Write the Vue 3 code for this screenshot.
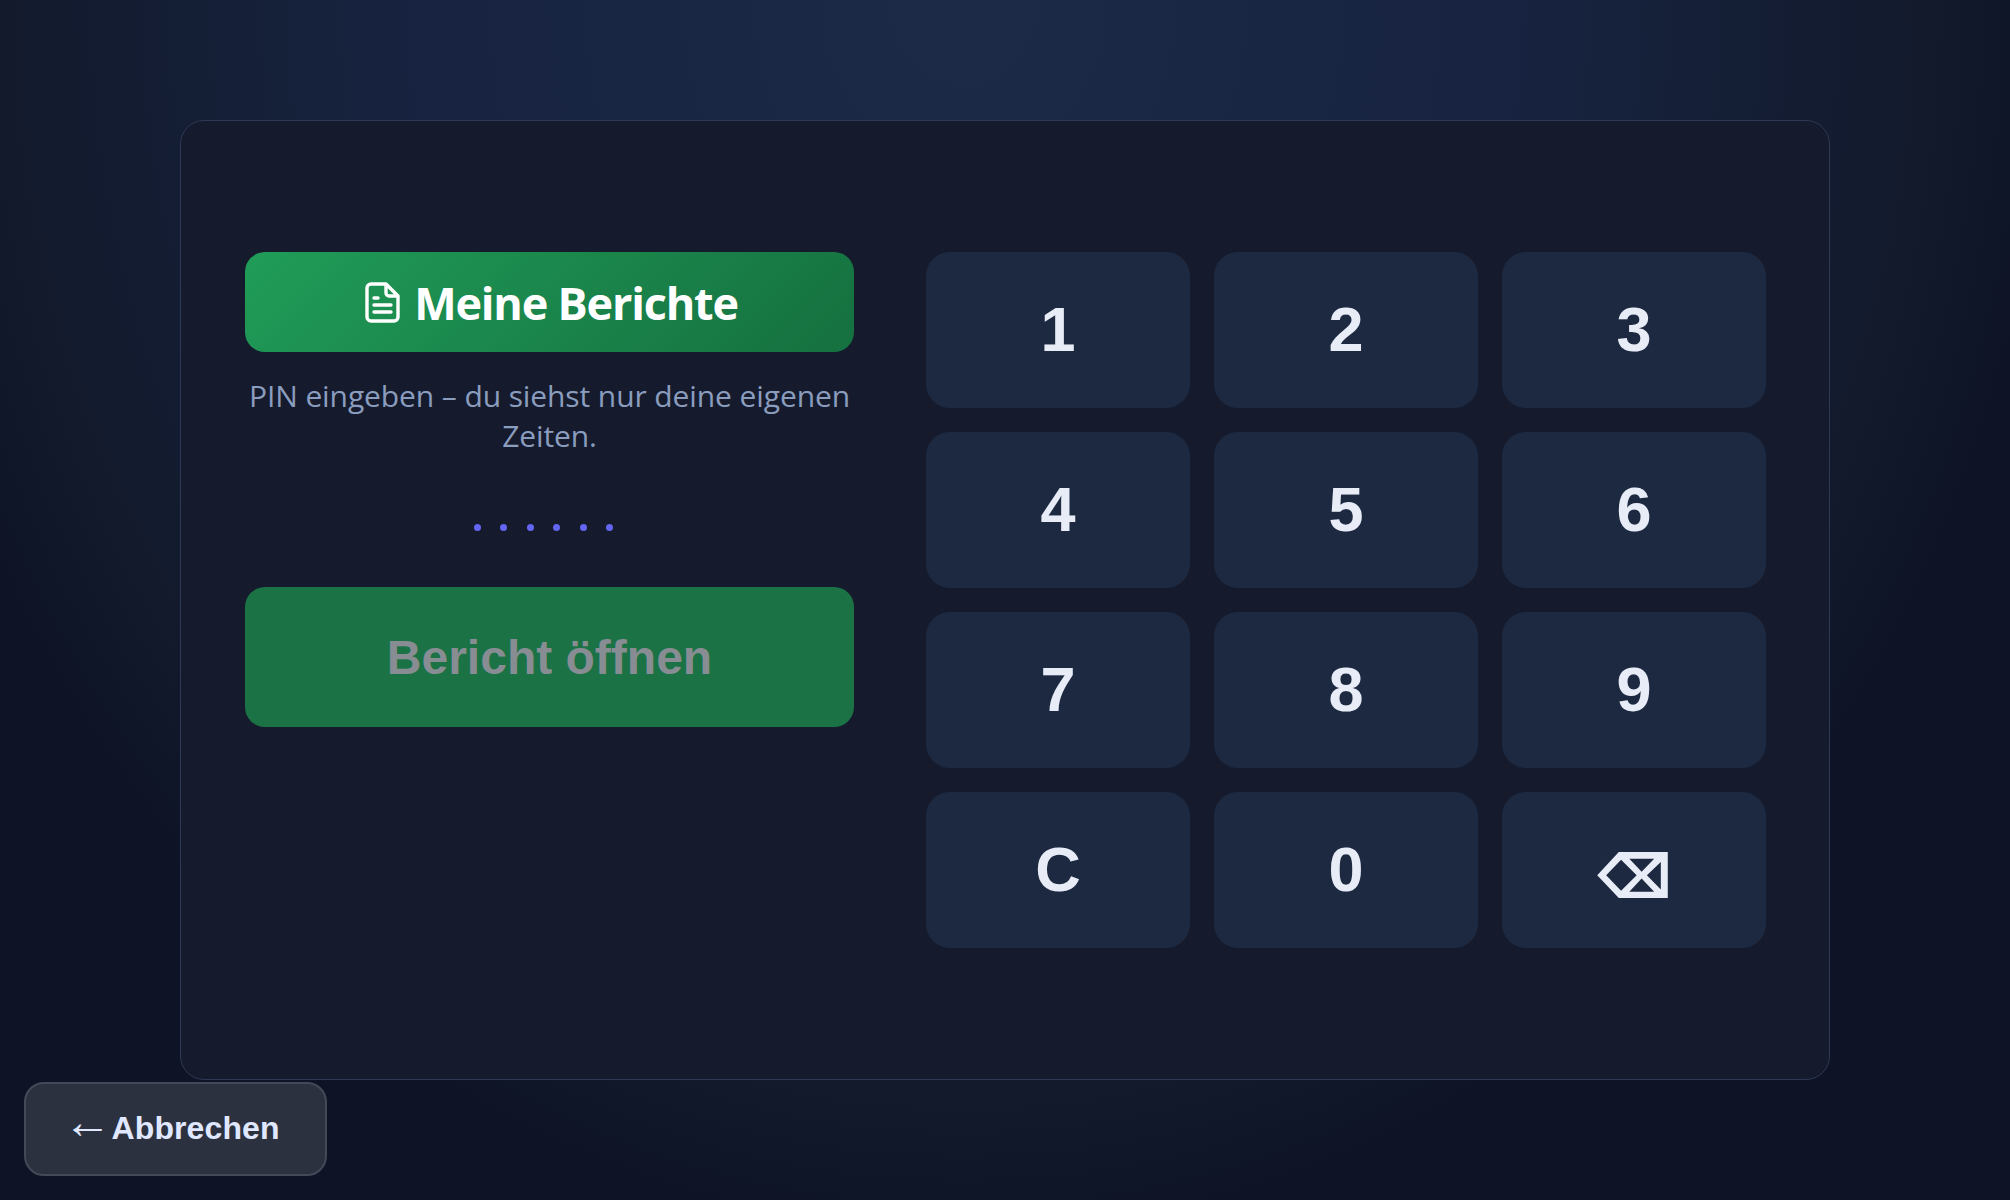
<script setup>
const keys = ['1', '2', '3', '4', '5', '6', '7', '8', '9', 'C', '0']
const dots = [0, 1, 2, 3, 4, 5]
</script>

<template>
  <div class="page">
    <div class="card">
      <div class="left">
        <div class="title">
          <svg class="doc" viewBox="0 0 35 41" width="35" height="41">
            <path d="M6 2h15l12 12v21a4 4 0 0 1-4 4H6a4 4 0 0 1-4-4V6a4 4 0 0 1 4-4z" fill="none" stroke="#fff" stroke-width="3.4" stroke-linejoin="round" />
            <path d="M21 3v8a3 3 0 0 0 3 3h8" fill="none" stroke="#fff" stroke-width="3.4" />
            <path d="M9 16h4M9 23h17M9 30h17" fill="none" stroke="#fff" stroke-width="3.4" stroke-linecap="round" />
          </svg>
          <span>Meine Berichte</span>
        </div>
        <p class="hint">PIN eingeben – du siehst nur deine eigenen Zeiten.</p>
        <div class="dots">
          <span v-for="d in dots" :key="d" class="dot"></span>
        </div>
        <button class="open" disabled>Bericht öffnen</button>
      </div>
      <div class="pad">
        <button v-for="k in keys" :key="k" class="key">{{ k }}</button>
        <button class="key" aria-label="Löschen">
          <svg class="del" viewBox="0 0 71 46.3" width="71" height="46">
            <path fill="#e8ecf6" fill-rule="evenodd" d="M0 23.3 21.7 0H71V46.3H21.7ZM9 23.3 24 39 39.7 23.3 24 7.7ZM32.3 6.7 44.7 20 57.3 6.7ZM64 10 50 23.3 64 37.7ZM32.3 40H57.3L44.7 26.7Z" />
          </svg>
        </button>
      </div>
    </div>
    <button class="back">
      <span class="arrow">←</span>
      <span>Abbrechen</span>
    </button>
  </div>
</template>

<style>
html, body {
  margin: 0;
  background: #0c1222;
}
</style>

<style scoped>
.page {
  width: 2010px;
  height: 1200px;
  display: flex;
  align-items: center;
  justify-content: center;
  position: relative;
  overflow: hidden;
  background: radial-gradient(ellipse 1100px 1250px at 48% 0%, #1c2a47 0%, #172340 50%, #121a2c 87%, #0e1426 100%);
  font-family: "Liberation Sans", Arial, sans-serif;
}

.card {
  box-sizing: border-box;
  width: 1650px;
  height: 960px;
  padding: 0 63px 0 64px;
  display: flex;
  align-items: center;
  gap: 72px;
  background: #151b2d;
  border: 1px solid #2d3854;
  border-radius: 24px;
}

.left {
  width: 609px;
  align-self: flex-start;
  padding-top: 131px;
  display: flex;
  flex-direction: column;
  align-items: stretch;
}

.title {
  height: 100px;
  padding-left: 4px;
  display: flex;
  align-items: center;
  justify-content: center;
  gap: 14px;
  border-radius: 20px;
  background: linear-gradient(135deg, #209c58, #15703f);
  color: #fff;
  font-family: "Open Sans", sans-serif;
  font-size: 45px;
  font-weight: 700;
  letter-spacing: -1.2px;
}

.doc {
  flex: none;
}

.hint {
  margin: 24px 0 0;
  text-align: center;
  color: #8b9dbf;
  font-family: "Open Sans", sans-serif;
  font-size: 30px;
  letter-spacing: -0.1px;
  line-height: 40px;
}

.dots {
  display: flex;
  justify-content: center;
  gap: 19.5px;
  margin-top: 68px;
  padding-right: 12px;
}

.dot {
  width: 7px;
  height: 7px;
  border-radius: 50%;
  background: #6366f1;
}

.open {
  margin-top: 56px;
  height: 140px;
  border: none;
  border-radius: 20px;
  background: #1b7245;
  color: #888d94;
  font-family: inherit;
  font-size: 48px;
  font-weight: 700;
}

.pad {
  display: grid;
  grid-template-columns: repeat(3, 264px);
  grid-auto-rows: 156px;
  gap: 24px;
}

.key {
  padding-bottom: 4px;
  border: none;
  border-radius: 24px;
  background: #1c2940;
  color: #e8ecf6;
  font-family: inherit;
  font-size: 63px;
  font-weight: 700;
}

.del {
  display: block;
  margin: 12px 0 0 89px;
}

.back {
  position: absolute;
  left: 24px;
  bottom: 24px;
  width: 303px;
  height: 94px;
  padding: 0 8px 2px 0;
  box-sizing: border-box;
  display: flex;
  align-items: center;
  justify-content: center;
  border: 2px solid #444957;
  border-radius: 20px;
  background: #2c3140;
  color: #e0e8ff;
  font-family: inherit;
  font-size: 32px;
  font-weight: 700;
  letter-spacing: 0.1px;
}

.arrow {
  margin-bottom: 12px;
  font-size: 48px;
  line-height: 0;
  font-weight: 400;
}
</style>
